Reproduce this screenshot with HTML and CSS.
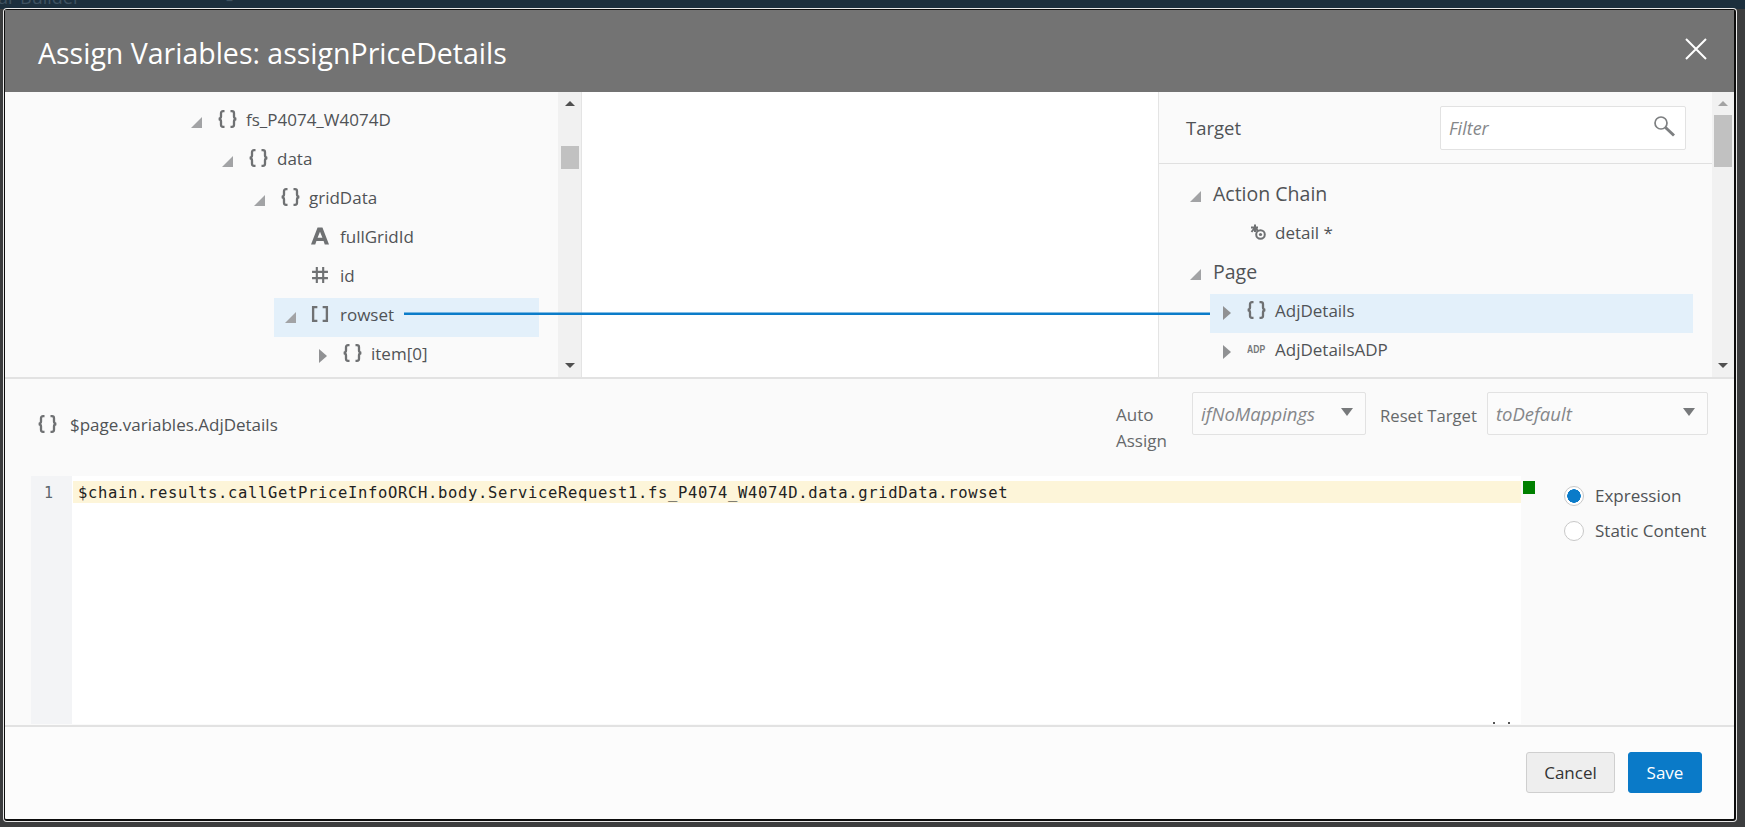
FILE: index.html
```html
<!DOCTYPE html>
<html lang="en">
<head>
<meta charset="utf-8">
<title>Assign Variables</title>
<link rel="stylesheet" href="styles.css">
</head>
<body>
<svg class="defs" width="0" height="0" aria-hidden="true">
  <symbol id="i-obj" viewBox="0 0 19 18"><path d="M6.5 1.2H5Q3 1.2 3 3.2V6.6Q3 8.6 0.8 9Q3 9.4 3 11.4V14.8Q3 16.8 5 16.8H6.5M12.5 1.2H14Q16 1.2 16 3.2V6.6Q16 8.6 18.2 9Q16 9.4 16 11.4V14.8Q16 16.8 14 16.8H12.5" fill="none" stroke="currentColor" stroke-width="2.3"/></symbol>
  <symbol id="i-arr" viewBox="0 0 17 17"><path d="M6 2H2V15H6M11 2H15V15H11" fill="none" stroke="currentColor" stroke-width="2.2"/></symbol>
  <symbol id="i-num" viewBox="0 0 17 17"><path d="M5.5 1V16M11.5 1V16M1 5.5H16M1 11.5H16" fill="none" stroke="currentColor" stroke-width="2"/></symbol>
  <symbol id="i-str" viewBox="0 0 17 17"><path fill-rule="evenodd" d="M6.2 0.5H10.8L17 16.5H13L11.9 13.2H5.1L4 16.5H0ZM8.5 4.5 6.2 10.2H10.8Z" fill="currentColor"/></symbol>
  <symbol id="i-open" viewBox="0 0 11 11"><path d="M11 0V11H0Z" fill="currentColor"/></symbol>
  <symbol id="i-closed" viewBox="0 0 8 14"><path d="M0 0L8 7L0 14Z" fill="currentColor"/></symbol>
  <symbol id="i-param" viewBox="0 0 16 16"><path d="M5 0.5V8M1 3.5H8M1.5 8 5 3.5 8 7" fill="none" stroke="currentColor" stroke-width="2"/><circle cx="10.5" cy="10.5" r="4.3" fill="#fafafa" stroke="currentColor" stroke-width="2"/><circle cx="10.5" cy="10.5" r="1.6" fill="currentColor"/></symbol>
</svg>

<div class="topbar"><span class="topbar-text">ar Builder</span><span class="topbar-dash">–</span></div>

<div class="dialog">
  <header class="dialog-head">
    <h1 class="dialog-title">Assign Variables: assignPriceDetails</h1>
    <svg class="close" viewBox="0 0 22 22" width="22" height="22"><path d="M1 1L21 21M21 1L1 21" stroke="#fff" stroke-width="2" fill="none"/></svg>
  </header>

  <section class="mapper">
    <div class="source">
      <div class="tree tree-source">
        <div class="row l-a"><svg class="tri"><use href="#i-open"/></svg><svg class="ico"><use href="#i-obj"/></svg><span>fs_P4074_W4074D</span></div>
        <div class="row l-b"><svg class="tri"><use href="#i-open"/></svg><svg class="ico"><use href="#i-obj"/></svg><span>data</span></div>
        <div class="row l-c"><svg class="tri"><use href="#i-open"/></svg><svg class="ico"><use href="#i-obj"/></svg><span>gridData</span></div>
        <div class="row l-d"><span class="tri"></span><svg class="ico ico-s"><use href="#i-str"/></svg><span>fullGridId</span></div>
        <div class="row l-d"><span class="tri"></span><svg class="ico ico-s"><use href="#i-num"/></svg><span>id</span></div>
        <div class="row row-sel sel-source"><svg class="tri"><use href="#i-open"/></svg><svg class="ico ico-s"><use href="#i-arr"/></svg><span>rowset</span></div>
        <div class="row l-e"><svg class="tri-c"><use href="#i-closed"/></svg><svg class="ico"><use href="#i-obj"/></svg><span>item[0]</span></div>
      </div>
      <div class="scroll scroll-source">
        <span class="up"></span><span class="thumb thumb-source"></span><span class="down"></span>
      </div>
    </div>
    <div class="canvas"></div>
    <div class="target">
      <div class="target-main">
        <div class="target-head">
          <span class="target-title">Target</span>
          <div class="filter"><span>Filter</span>
            <svg viewBox="0 0 22 22" width="22" height="22"><circle cx="8" cy="8" r="6" fill="none" stroke="#7d7f81" stroke-width="1.7"/><path d="M12.5 12.5L21 20.5" stroke="#7d7f81" stroke-width="3"/></svg>
          </div>
        </div>
        <div class="tree tree-target">
          <div class="row row-group t-a"><svg class="tri tri-g"><use href="#i-open"/></svg><span>Action Chain</span></div>
          <div class="row t-leaf"><svg class="ico-p"><use href="#i-param"/></svg><span>detail *</span></div>
          <div class="row row-group t-a"><svg class="tri tri-g"><use href="#i-open"/></svg><span>Page</span></div>
          <div class="row row-sel sel-target"><svg class="tri-c"><use href="#i-closed"/></svg><svg class="ico"><use href="#i-obj"/></svg><span>AdjDetails</span></div>
          <div class="row t-b"><svg class="tri-c"><use href="#i-closed"/></svg><span class="adp">ADP</span><span>AdjDetailsADP</span></div>
        </div>
      </div>
      <div class="scroll scroll-target">
        <span class="up up-dim"></span><span class="thumb thumb-target"></span><span class="down"></span>
      </div>
    </div>
    <svg class="wire" width="1729" height="285"><path d="M399 221.7H1205" fill="none" stroke="#0b7cc9" stroke-width="2.6"/></svg>
  </section>

  <section class="detail">
    <div class="toolbar">
      <div class="var-name"><svg class="ico"><use href="#i-obj"/></svg><span>$page.variables.AdjDetails</span></div>
      <div class="options">
        <label class="opt-label opt-auto">Auto Assign</label>
        <div class="select select-auto"><span>ifNoMappings</span><i class="caret"></i></div>
        <label class="opt-label opt-reset">Reset Target</label>
        <div class="select select-reset"><span>toDefault</span><i class="caret"></i></div>
      </div>
    </div>
    <div class="editor">
      <div class="gutter">1</div>
      <div class="code">
        <div class="code-line">$chain.results.callGetPriceInfoORCH.body.ServiceRequest1.fs_P4074_W4074D.data.gridData.rowset</div>
        <i class="tick tick-a"></i><i class="tick tick-b"></i>
      </div>
      <div class="ruler"><i class="ok"></i></div>
      <div class="radios">
        <div class="radio-row"><i class="radio radio-on"></i><span>Expression</span></div>
        <div class="radio-row"><i class="radio"></i><span>Static Content</span></div>
      </div>
    </div>
  </section>

  <footer class="dialog-foot">
    <button class="btn btn-cancel">Cancel</button>
    <button class="btn btn-save">Save</button>
  </footer>
</div>
</body>
</html>
```

FILE: styles.css
```css
* { box-sizing: border-box; }
html, body { margin: 0; height: 827px; overflow: hidden; }
body {
  background: #3c3d3e;
  font-family: "Open Sans", "Noto Sans", sans-serif;
  font-size: 17px;
  color: #505356;
}
.defs { position: absolute; }

.topbar { height: 9px; background: #1c2f3d; overflow: hidden; display: flex; color: #3f5261; }
.topbar-text { font-size: 18px; line-height: 12px; margin-top: -9px; margin-left: -2px; width: 228px; }
.topbar-dash { font-size: 14px; line-height: 8px; margin-top: -4px; }

.dialog {
  width: 1732px;
  height: 812px;
  margin-left: 4px;
  background: #fafafa;
  border: 2px solid #0d0d0d;
  border-top-width: 1px;
  border-left-width: 1px;
  box-shadow: 0 0 0 1px #e8e8e8;
  border-radius: 3px;
  display: flex;
  flex-direction: column;
}

.dialog-head {
  height: 82px;
  flex: none;
  background: #737373;
  display: flex;
  align-items: center;
  justify-content: space-between;
  padding: 0 27px 0 33px;
}
.dialog-title { margin: 0; color: #fff; font-size: 28.5px; font-weight: 400; line-height: 86px; height: 82px; }
.close { margin-top: -5px; }

.mapper {
  position: relative;
  flex: none;
  height: 287px;
  border-bottom: 2px solid #e2e2e2;
  display: grid;
  grid-template-columns: 577px 577px 1fr;
}
.source { display: flex; border-right: 1px solid #e4e4e4; min-width: 0; }
.canvas { background: #fff; border-right: 1px solid #e4e4e4; }
.target { display: flex; min-width: 0; }
.target-main { flex: 1; min-width: 0; }

.tree-source { flex: 1; padding-top: 11px; }
.row { height: 39px; padding-bottom: 7px; display: flex; align-items: center; white-space: nowrap; }
.row span { display: block; }
.tri { width: 11px; height: 11px; margin-right: 16px; color: #a2a3a5; flex: none; margin-top: 7px; }
.tri-c { width: 8px; height: 14px; margin-right: 16px; color: #909193; flex: none; margin-top: 5px; }
.ico { width: 19px; height: 18px; margin-right: 9px; color: #6f7173; flex: none; }
.ico-s { width: 18px; height: 18px; margin-left: -1px; margin-right: 11px; }

.l-a { padding-left: 186px; }
.l-b { padding-left: 217px; }
.l-c { padding-left: 249px; }
.l-d { padding-left: 280px; }
.l-e { padding-left: 314px; }
.row-sel { background: #e3f0fa; }
.sel-source { margin-left: 269px; width: 265px; padding-left: 11px; }

.scroll { flex: none; background: #f1f1f1; display: flex; flex-direction: column; align-items: center; position: relative; }
.scroll-source { width: 23px; }
.scroll-target { width: 22px; }
.up, .down { position: absolute; left: 50%; margin-left: -5px; width: 0; height: 0; border-left: 5px solid transparent; border-right: 5px solid transparent; }
.up { top: 9px; border-bottom: 5px solid #505050; }
.up-dim { border-bottom-color: #a3a3a3; }
.down { bottom: 9px; border-top: 5px solid #505050; }
.thumb { display: block; width: 18px; background: #c1c1c1; }
.thumb-source { margin-top: 54px; height: 23px; }
.thumb-target { margin-top: 23px; height: 52px; }

.target-head {
  height: 72px;
  border-bottom: 1px solid #e0e0e0;
  display: flex;
  align-items: center;
  justify-content: space-between;
  padding: 0 26px 0 27px;
}
.target-title { font-size: 18.5px; color: #505356; }
.filter {
  width: 246px;
  height: 44px;
  background: #fff;
  border: 1px solid #e2e2e2;
  border-radius: 2px;
  display: flex;
  align-items: center;
  justify-content: space-between;
  padding: 0 10px 0 8px;
  color: #85878a;
  font-style: italic;
  font-size: 18px;
}
.filter svg { margin-top: -3px; }
.tree-target { padding-top: 13px; }
.row-group { font-size: 19.5px; }
.tri-g { margin-right: 12px; }
.t-a { padding-left: 31px; }
.t-leaf { padding-left: 91px; }
.ico-p { width: 16px; height: 16px; margin-right: 9px; color: #6f7173; flex: none; }
.sel-target { margin: 0 19px 0 51px; padding-left: 13px; }
.t-b { padding-left: 64px; }
.adp { width: 19px; margin-right: 9px; font-family: "Liberation Sans", sans-serif; font-size: 11px; font-weight: 700; color: #77797b; transform: scaleX(0.78); transform-origin: left center; }

.wire { position: absolute; left: 0; top: 0; pointer-events: none; }

.detail { flex: none; height: 346px; }
.toolbar {
  height: 97px;
  display: flex;
  justify-content: space-between;
  align-items: flex-start;
  padding: 13px 26px 0 33px;
}
.var-name { display: flex; align-items: center; height: 24px; margin-top: 20px; }
.var-name .ico { margin-right: 13px; }
.options { display: flex; align-items: flex-start; }
.opt-label { display: block; line-height: 26px; color: #66696b; }
.opt-auto { width: 76px; margin-top: 10px; }
.opt-reset { width: 107px; margin: 11px 0 0 14px; font-size: 16.7px; }
.select {
  height: 43px;
  background: #fbfbfb;
  border: 1px solid #e2e2e2;
  border-radius: 2px;
  display: flex;
  align-items: center;
  justify-content: space-between;
  padding: 0 12px 0 8px;
  color: #85878a;
  font-style: italic;
  font-size: 18.5px;
}
.select-auto { width: 174px; }
.select-reset { width: 221px; }
.caret { width: 0; height: 0; border-left: 6px solid transparent; border-right: 6px solid transparent; border-top: 8px solid #77797b; margin-top: -3px; }

.editor { height: 248px; display: flex; padding-left: 26px; }
.gutter { width: 41px; background: #f3f4f6; text-align: center; color: #5c666d; font-family: "DejaVu Sans Mono", monospace; font-size: 15px; line-height: 22px; padding-top: 6px; padding-right: 6px; }
.code { width: 1449px; background: #fff; padding: 5px 0 0 1px; position: relative; }
.code-line { height: 22px; line-height: 22px; background: #fdf5d9; padding: 1px 0 0 5px; font-family: "DejaVu Sans Mono", monospace; font-size: 15.5px; letter-spacing: 0.67px; color: #222; white-space: nowrap; }
.tick { position: absolute; bottom: 0; width: 2px; height: 2px; background: #555; }
.tick-a { left: 1421px; }
.tick-b { left: 1436px; }
.ruler { width: 43px; padding: 5px 0 0 2px; }
.ok { display: block; width: 12px; height: 13px; background: #008000; }
.radios { padding-top: 2px; }
.radio-row { display: flex; align-items: center; height: 35px; }
.radio { width: 20px; height: 20px; border-radius: 50%; border: 1px solid #c8c8c8; background: #fff; margin-right: 11px; flex: none; }
.radio-on { background: radial-gradient(circle, #0a7bc9 0 6.5px, #fff 7px); }

.dialog-foot {
  height: 94px;
  flex: none;
  background: #fcfcfc;
  border-top: 2px solid #e2e2e2;
  display: flex;
  justify-content: flex-end;
  gap: 13px;
  padding: 25px 32px 0 0;
  border-radius: 0 0 2px 2px;
}
.btn { height: 41px; border-radius: 3px; font: inherit; }
.btn-cancel { width: 89px; background: #eeeeee; border: 1px solid #cfcfcf; color: #333; }
.btn-save { width: 74px; background: #0a7ac8; border: 1px solid #0a7ac8; color: #fff; }
```
